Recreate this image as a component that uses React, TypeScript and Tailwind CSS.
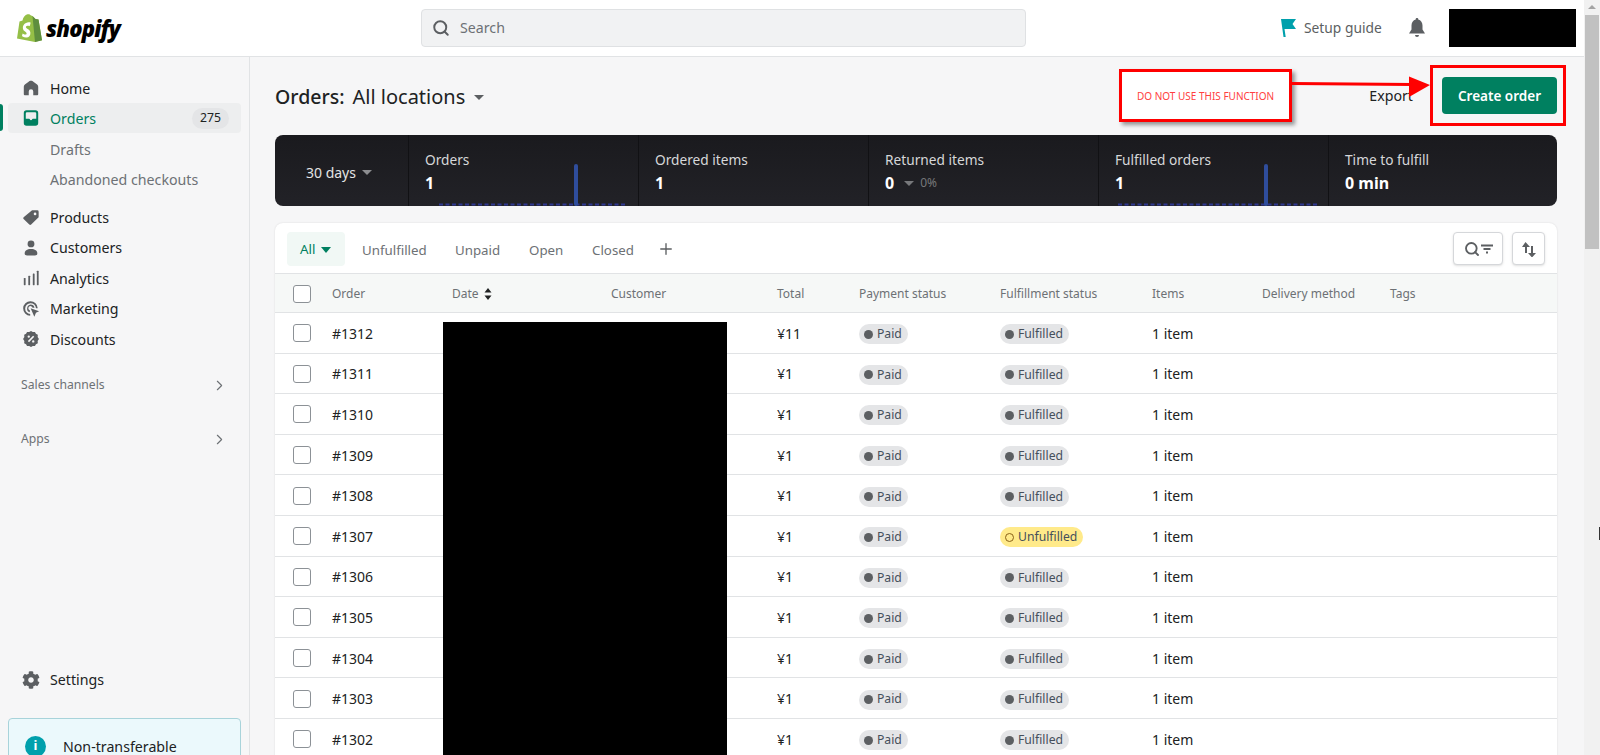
import type { ReactNode } from "react";
import { FaCog } from "react-icons/fa";
import { ChevronRight, Plus, Search } from "lucide-react";

const FONT = "font-['Noto_Sans','Open_Sans',sans-serif]";

const rows = [
  { id: "#1312", total: "¥11", state: "Fulfilled" },
  { id: "#1311", total: "¥1", state: "Fulfilled" },
  { id: "#1310", total: "¥1", state: "Fulfilled" },
  { id: "#1309", total: "¥1", state: "Fulfilled" },
  { id: "#1308", total: "¥1", state: "Fulfilled" },
  { id: "#1307", total: "¥1", state: "Unfulfilled" },
  { id: "#1306", total: "¥1", state: "Fulfilled" },
  { id: "#1305", total: "¥1", state: "Fulfilled" },
  { id: "#1304", total: "¥1", state: "Fulfilled" },
  { id: "#1303", total: "¥1", state: "Fulfilled" },
  { id: "#1302", total: "¥1", state: "Fulfilled" },
];

const COLS = "grid grid-cols-[57px_120px_159px_166px_82px_141px_152px_110px_128px_1fr] items-center";

function Icon({ children, color = "#5c5f62" }: { children: ReactNode; color?: string }) {
  return (
    <svg viewBox="0 0 20 20" width="18" height="18" fill={color} fillRule="evenodd">
      {children}
    </svg>
  );
}

const icons = {
  home: (
    <Icon>
      <path d="M10 2C8.8 2 8 2.6 7 3.3L3.2 6.2C2.4 6.8 2 7.6 2 8.6V17a1 1 0 0 0 1 1h4.5v-4a2.5 2.5 0 0 1 5 0v4H17a1 1 0 0 0 1-1V8.6c0-1-.4-1.8-1.2-2.4L13 3.3C12 2.6 11.2 2 10 2z" />
    </Icon>
  ),
  orders: (
    <Icon color="#008060">
      <path d="M5 1.500h10a3 3 0 0 1 3 3v11a3 3 0 0 1-3 3H5a3 3 0 0 1-3-3v-11a3 3 0 0 1 3-3zm.5 2.200a1.300 1.300 0 0 0-1.300 1.300v5.700h3.600a1 1 0 0 1 1 1 1.400 1.400 0 0 0 2.400 0 1 1 0 0 1 1-1h3.600V5a1.300 1.300 0 0 0-1.300-1.300z" />
    </Icon>
  ),
  tag: (
    <Icon>
      <path d="M11.500 1.500H17a1.500 1.500 0 0 1 1.500 1.500v5.500c0 .5-.2 1-.6 1.300l-7.700 7.500a1.500 1.500 0 0 1-2.100 0L1.800 11.200a1.500 1.500 0 0 1 0-2.100l8.400-7c.4-.4.800-.6 1.300-.6zM14.500 4a1.500 1.500 0 1 0 0 3 1.500 1.500 0 0 0 0-3z" />
    </Icon>
  ),
  person: (
    <Icon>
      <circle cx="10" cy="5.500" r="3.800" />
      <path d="M3 16c0-3 2.500-4.800 7-4.800s7 1.800 7 4.800c0 1.500-1 2.300-2.500 2.300h-9C4 18.300 3 17.500 3 16z" />
    </Icon>
  ),
  chart: (
    <Icon>
      <rect x="2" y="10" width="2" height="8" rx=".5" />
      <rect x="7" y="7.500" width="2" height="10.500" rx=".5" />
      <rect x="12" y="5" width="2" height="13" rx=".5" />
      <rect x="16.500" y="2" width="2" height="16" rx=".5" />
    </Icon>
  ),
  target: (
    <Icon>
      <path d="M9.500 1.500a8 8 0 0 1 8 7.600h-2a6 6 0 1 0-6.400 6.400v2A8 8 0 0 1 9.500 1.500z" />
      <path d="M9.500 5a4.500 4.500 0 0 1 4.400 3.500h-2.200a2.400 2.400 0 1 0-3 3v2.200A4.500 4.500 0 0 1 9.500 5z" />
      <path d="M9.600 9.300l9.400 3.300-3.500 1.700-1.800 4.200z" />
    </Icon>
  ),
  discount: (
    <Icon>
      <path d="M10 1l2 1.300 2.400-.2 1.100 2.100 2.100 1.100-.2 2.400L18.800 10l-1.400 2.300.2 2.400-2.100 1.100-1.100 2.100-2.400-.2-2 1.300-2-1.300-2.400.2-1.100-2.100-2.100-1.100.2-2.400L1.200 10l1.400-2.300-.2-2.400 2.100-1.100 1.100-2.100 2.400.2zM12.300 6.300L6.500 12.300l1.300 1.300 5.800-6zM7.500 6a1.300 1.300 0 1 0 0 2.600 1.300 1.300 0 0 0 0-2.600zm5 5.400a1.300 1.300 0 1 0 0 2.600 1.300 1.300 0 0 0 0-2.600z" />
    </Icon>
  ),
};

function NavItem({ icon, label }: { icon: ReactNode; label: string }) {
  return (
    <div className="flex h-[30.400px] shrink-0 items-center pl-[22px] text-[14.200px] text-[#202223]">
      <span className="flex w-[28px] shrink-0">{icon}</span>
      {label}
    </div>
  );
}

function SubItem({ label }: { label: string }) {
  return <div className="flex h-[30px] shrink-0 items-center pl-[50px] text-[14.200px] text-[#6d7175]">{label}</div>;
}

function SectionLink({ label, className }: { label: string; className: string }) {
  return (
    <div className={`flex shrink-0 items-center justify-between pl-[21px] pr-[21px] text-[12.200px] text-[#6d7175] ${className}`}>
      {label}
      <ChevronRight size={17} color="#6d7175" strokeWidth={1.600} />
    </div>
  );
}

function Sidebar() {
  return (
    <aside className="flex w-[250px] shrink-0 flex-col overflow-hidden border-r border-[#e1e3e5] bg-[#f6f6f7] pt-[16px]">
      <NavItem icon={icons.home} label="Home" />
      <div className="relative mb-[1px] shrink-0">
        <div className="absolute left-0 top-[1px] h-[27px] w-[3px] rounded-r bg-[#008060]" />
        <div className="ml-[8px] mr-[8px] flex h-[30px] items-center rounded-[4px] bg-[#edeeef] pl-[14px] pr-[12px] text-[14.200px] text-[#008060]">
          <span className="flex w-[28px] shrink-0">{icons.orders}</span>
          Orders
          <span className="ml-auto rounded-full bg-[#e4e5e7] px-[8px] py-[1px] text-[12.200px] text-[#202223]">275</span>
        </div>
      </div>
      <SubItem label="Drafts" />
      <SubItem label="Abandoned checkouts" />
      <div className="h-[8px] shrink-0" />
      <NavItem icon={icons.tag} label="Products" />
      <NavItem icon={icons.person} label="Customers" />
      <NavItem icon={icons.chart} label="Analytics" />
      <NavItem icon={icons.target} label="Marketing" />
      <NavItem icon={icons.discount} label="Discounts" />
      <SectionLink label="Sales channels" className="mt-[21px] h-[20px]" />
      <SectionLink label="Apps" className="mt-[34px] h-[20px]" />
      <div className="mt-[215px] shrink-0">
        <NavItem icon={<FaCog size={18} color="#5c5f62" />} label="Settings" />
      </div>
      <div className="ml-[8px] mr-[8px] mt-[23px] flex h-[70px] shrink-0 items-start rounded-[4px] border border-[#a8d3da] bg-[#ebf9fc] pl-[16px] pt-[17px]">
        <span className="flex h-[21px] w-[21px] items-center justify-center rounded-full bg-[#00a0ac] text-[13px] font-bold text-white">i</span>
        <span className="ml-[17px] text-[14.200px] text-[#202223]">Non-transferable</span>
      </div>
    </aside>
  );
}

function TopBar() {
  return (
    <header className="relative z-10 flex h-[57px] shrink-0 items-center border-b border-[#e1e3e5] bg-white">
      <div className="flex w-[421px] shrink-0 items-center pl-[17px]">
        <svg viewBox="0 0 25 28" width="25" height="28">
          <path fill="#95bf47" d="M21.500 5.500l-3-.4L15.500 2 14 1.500C13 .5 12 0 10.500.3 8 .8 6 3.500 5.500 6.500L2.500 7.500 0 24.500 18 28l7-1.700z" />
          <path fill="#5e8e3e" d="M21.500 5.500l-3-.4L15.500 2 18 28l7-1.700z" />
          <path fill="#fff" d="M13.500 9.500l-.8 2.700s-1-.5-2.100-.4c-1.700.1-1.700 1.100-1.700 1.400.1 1.500 4.300 1.900 4.500 5.500.2 2.800-1.500 4.700-3.900 4.900-2.900.2-4.500-1.500-4.500-1.500l.6-2.600s1.600 1.200 2.900 1.100c.8 0 1.100-.7 1.100-1.200-.1-2-3.500-1.900-3.700-5.200-.2-2.800 1.700-5.600 5.800-5.900 1.100-.1 1.800.2 1.800.2z" />
        </svg>
        <span className="ml-[4px] font-['Open_Sans',sans-serif] text-[22px] font-extrabold italic leading-none tracking-[-0.8px] text-black">shopify</span>
      </div>
      <div className="flex h-[38px] w-[605px] shrink-0 items-center rounded-[4px] border border-[#dfe1e3] bg-[#f1f2f3] pl-[10px] text-[14.200px] text-[#6d7175]">
        <Search size={18} color="#5c5f62" strokeWidth={2.600} />
        <span className="ml-[10px]">Search</span>
      </div>
      <div className="ml-[255px] flex items-center">
        <svg viewBox="0 0 15 18" width="15" height="18" fill="#00a0ac">
          <path d="M0 0h15l-3.500 5 3.500 5H3.500l1.200 8H2.500z" />
        </svg>
        <span className="ml-[8px] text-[13.800px] text-[#5c5f62]">Setup guide</span>
        <svg viewBox="0 0 16 20" width="16" height="20" fill="#5c5f62" className="ml-[27px]">
          <path d="M8 0a1.200 1.200 0 0 1 1.200 1.500C12 2.200 13.500 4.500 13.500 7.500v4L16 15.500H0l2.500-4v-4c0-3 1.500-5.300 4.300-6A1.200 1.200 0 0 1 8 0zM6 17h4a2 2 0 0 1-4 0z" />
        </svg>
        <div className="ml-[24px] h-[38px] w-[127px] bg-black" />
      </div>
    </header>
  );
}

function Stat({ label, children, dots }: { label: string; children: ReactNode; dots?: number }) {
  return (
    <div className="relative h-full w-[230px] shrink-0 border-l border-[#111114] pl-[16px] pt-[15px]">
      <div className="text-[13.700px] leading-[20px] text-[#d6d7d9]">{label}</div>
      <div className="mt-[2px] flex items-center text-[16px] font-bold leading-[22px] text-white">{children}</div>
      {dots !== undefined && (
        <svg width="220" height="42" className="absolute bottom-0 left-0">
          <line x1={dots} x2="218" y1="40.500" y2="40.500" stroke="#2e3790" strokeWidth="2" strokeDasharray="4 2.500" />
          <rect x="165" y="0" width="4" height="42" rx="2" fill="#2f4d9c" />
        </svg>
      )}
    </div>
  );
}

function StatsBar() {
  return (
    <div className="flex h-[71px] overflow-hidden rounded-lg bg-gradient-to-b from-[#1a1a1e] to-[#222227]">
      <div className="flex w-[133px] shrink-0 items-center pl-[31px] pt-[3px] text-[14px] text-[#e3e4e5]">
        30 days
        <span className="ml-[6px] mt-[1px] h-0 w-0 border-x-[5px] border-t-[5px] border-x-transparent border-t-[#8c8d90]" />
      </div>
      <Stat label="Orders" dots={30}>1</Stat>
      <Stat label="Ordered items">1</Stat>
      <Stat label="Returned items">
        0
        <span className="ml-[10px] h-0 w-0 border-x-[5px] border-t-[5px] border-x-transparent border-t-[#77787b]" />
        <span className="ml-[6px] text-[12px] font-normal text-[#77787b]">0%</span>
      </Stat>
      <Stat label="Fulfilled orders" dots={19}>1</Stat>
      <Stat label="Time to fulfill">0 min</Stat>
    </div>
  );
}

function Checkbox() {
  return <span className="ml-[18px] block h-[18px] w-[18px] rounded-[3px] border-[1.500px] border-[#8c9196] bg-white" />;
}

function Badge({ state }: { state: string }) {
  const open = state === "Unfulfilled";
  return (
    <span
      className={`mt-[2px] inline-flex h-[20px] items-center rounded-full pl-[5px] pr-[6px] text-[12.200px] ${
        open ? "bg-[#ffea8a] text-[#454f5b]" : "bg-[#e4e5e7] text-[#454f5b]"
      }`}
    >
      {open ? (
        <span className="h-[9px] w-[9px] rounded-full border-[1.500px] border-[#8a6116]" />
      ) : (
        <span className="h-[9px] w-[9px] rounded-full bg-[#5c5f62]" />
      )}
      <span className="ml-[4px]">{state}</span>
    </span>
  );
}

function OrdersCard() {
  const tabs = [
    { label: "Unfulfilled", w: "w-[93px]" },
    { label: "Unpaid", w: "w-[74px]" },
    { label: "Open", w: "w-[63px]" },
    { label: "Closed", w: "w-[74px]" },
  ];
  return (
    <div className="relative mt-[17px] rounded-t-lg bg-white shadow-[0_0_2px_rgba(0,0,0,0.12)]">
      <div className="flex h-[51px] items-center border-b border-[#e1e3e5] pl-[12px] pr-[12px] pt-[1px]">
        <div className="mr-[17px] flex h-[34px] w-[58px] items-center rounded-[4px] bg-[#f1f8f5] pl-[13px] pt-[2px] text-[13.300px] text-[#008060]">
          All
          <span className="ml-[6px] h-0 w-0 border-x-[5px] border-t-[6px] border-x-transparent border-t-[#008060]" />
        </div>
        {tabs.map((t) => (
          <div key={t.label} className={`${t.w} pt-[4px] text-[13.300px] text-[#6d7175]`}>
            {t.label}
          </div>
        ))}
        <Plus size={18} color="#5c5f62" strokeWidth={1.800} className="-ml-[9px]" />
        <div className="ml-auto flex h-[33px] w-[50px] items-center justify-center rounded-[4px] border border-[#d5d7da] bg-white shadow-sm">
          <Search size={16} color="#5c5f62" strokeWidth={2.800} />
          <svg viewBox="0 0 12 12" width="12" height="12" stroke="#5c5f62" strokeWidth="1.800" className="ml-[1px]">
            <path d="M0 2.500h12M2.500 6h7M5 9.500h2" />
          </svg>
        </div>
        <div className="ml-[9px] flex h-[33px] w-[33px] items-center justify-center rounded-[4px] border border-[#d5d7da] bg-white shadow-sm">
          <svg viewBox="0 0 16 16" width="16" height="16" fill="#5c5f62">
            <path d="M4.500 1L9 6H6v6H4V6H1z" />
            <path d="M10 5h2v7h3l-4 4.500L7 12h3z" />
          </svg>
        </div>
      </div>
      <div className={`${COLS} h-[39px] border-b border-[#e1e3e5] bg-[#f6f8f7] pt-[1px] text-[12px] text-[#6d7175]`}>
        <Checkbox />
        <span>Order</span>
        <span className="flex items-center">
          Date
          <svg viewBox="0 0 8 12" width="8" height="12" fill="#202223" className="ml-[5px]">
            <path d="M4 0l3.500 4.500h-7zM4 12L.5 7.500h7z" />
          </svg>
        </span>
        <span>Customer</span>
        <span>Total</span>
        <span>Payment status</span>
        <span>Fulfillment status</span>
        <span>Items</span>
        <span>Delivery method</span>
        <span>Tags</span>
      </div>
      {rows.map((r) => (
        <div key={r.id} className={`${COLS} h-[40.600px] border-b border-[#e1e3e5] pt-[1px] text-[14px] text-[#202223]`}>
          <Checkbox />
          <span>{r.id}</span>
          <span />
          <span />
          <span>{r.total}</span>
          <span className="flex">
            <Badge state="Paid" />
          </span>
          <span className="flex">
            <Badge state={r.state} />
          </span>
          <span>1 item</span>
          <span />
          <span />
        </div>
      ))}
      {/* redaction block over the customer column */}
      <div className="absolute left-[168px] top-[99px] h-[440px] w-[284px] bg-black" />
    </div>
  );
}

function PageHeader() {
  return (
    <div className="flex h-[37px] items-center">
      <span className="mt-[3px] text-[19.500px] font-medium text-[#202223]">Orders:</span>
      <span className="ml-[8px] mt-[3px] text-[20px] text-[#202223]">All locations</span>
      <span className="ml-[9px] mt-[3px] h-0 w-0 border-x-[5px] border-t-[5px] border-x-transparent border-t-[#5c5f62]" />
      <span className="ml-auto mt-[1px] text-[14.200px] text-[#202223]">Export</span>
      <button className="ml-[29px] h-[37px] w-[115px] rounded-[4px] bg-[#008060] pt-[2px] text-[13.500px] font-semibold text-white">
        Create order
      </button>
    </div>
  );
}

function Annotation() {
  return (
    <>
      <div className="absolute left-[869px] top-[12px] flex h-[53px] w-[173px] items-center border-[3px] border-[#ff0000] bg-white pl-[15px] pt-[1px] text-[10px] text-[#ff4040] shadow-[3px_3px_4px_rgba(0,0,0,0.4)]">
        DO NOT USE THIS FUNCTION
      </div>
      <svg width="140" height="30" className="absolute left-[1042px] top-[16px]">
        <path d="M0 10.500L120 11.500" stroke="#ff0000" strokeWidth="3" />
        <path d="M117 3.500L138 12L117 24z" fill="#ff0000" />
      </svg>
      <div className="absolute left-[1180px] top-[8px] h-[61px] w-[136px] border-[3px] border-[#ff0000]" />
    </>
  );
}

export default function App() {
  return (
    <div className={`relative flex h-screen w-full overflow-hidden bg-[#f6f6f7] ${FONT}`}>
      <div className="flex min-w-0 flex-1 flex-col">
        <TopBar />
        <div className="flex min-h-0 flex-1">
          <Sidebar />
          <main className="relative min-w-0 flex-1 overflow-hidden pl-[25px] pr-[27px] pt-[20px]">
            <PageHeader />
            <div className="mt-[21px]">
              <StatsBar />
            </div>
            <OrdersCard />
            <Annotation />
          </main>
        </div>
      </div>
      {/* browser scrollbar */}
      <div className="flex w-[16px] shrink-0 flex-col items-center bg-[#f1f1f1] pt-[5px]">
        <span className="h-0 w-0 border-x-[4px] border-b-[4px] border-x-transparent border-b-[#a3a3a3]" />
        <span className="mt-[6px] h-[234px] w-[14px] bg-[#c1c1c1]" />
      </div>
      <span className="absolute right-0 top-[527px] h-[13px] w-[1px] bg-[#333]" />
    </div>
  );
}
